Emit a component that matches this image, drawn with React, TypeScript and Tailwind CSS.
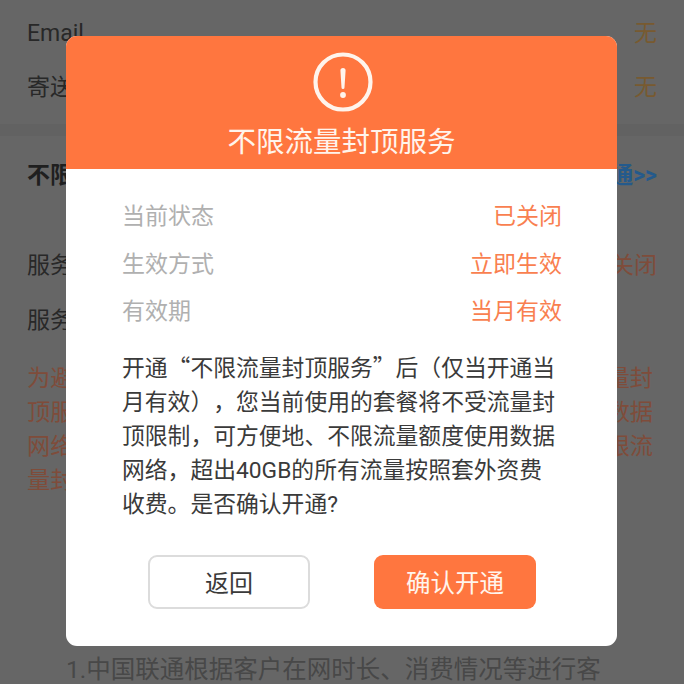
const cjk = '"Noto Sans CJK SC", "Noto Sans", sans-serif';

function Latin({ children }: { children: string }) {
  return <span className="font-[Roboto,sans-serif] leading-none">{children}</span>;
}

function BgRow({ label, value, valueClass }: { label: React.ReactNode; value: string; valueClass: string }) {
  return (
    <div className="flex h-[54px] items-center justify-between">
      <span className="text-[#282828]">{label}</span>
      <span className={valueClass}>{value}</span>
    </div>
  );
}

function InfoRow({ label, value }: { label: string; value: string }) {
  return (
    <div className="flex h-[47.5px] items-center justify-between">
      <span className="text-[#b0b0b0]">{label}</span>
      <span className="text-[#f97f50]">{value}</span>
    </div>
  );
}

export default function App() {
  return (
    <div
      className="relative h-[684px] w-[684px] overflow-hidden bg-[#666666] text-[23px] [text-spacing-trim:space-all]"
      style={{ fontFamily: cjk }}
      lang="zh-CN"
    >
      <div className="flex flex-col">
        <div className="pl-[27px] pr-[27px] pt-[4.5px]">
          <BgRow label={<Latin>Email</Latin>} value="无" valueClass="text-[#785a30]" />
          <BgRow label="寄送地址" value="无" valueClass="text-[#785a30]" />
        </div>
        <div className="mt-[11.5px] h-[12px] bg-[#626262]" />
        <div className="flex h-[74px] items-center justify-between pl-[27px] pr-[27px]">
          <span className="font-bold text-[#1f1f1f]">不限流量封顶服务</span>
          <span className="font-bold text-[#245a8c]">去开通<Latin>&gt;&gt;</Latin></span>
        </div>
        <div className="pl-[27px] pr-[27px] pt-[26px]">
          <div className="flex h-[55px] items-center justify-between">
            <span className="text-[#282828]">服务状态</span>
            <span className="text-[#7f4c3a]">已关闭</span>
          </div>
          <div className="flex h-[55px] items-center">
            <span className="text-[#282828]">服务说明</span>
          </div>
        </div>
        <p className="mt-[13px] pl-[27px] pr-[28px] text-[23.2px] leading-[34px] text-[#7f4c3a]">
          为避免因流量封顶影响您的正常使用，建议您开通不限流量封顶服务，开通后当月内您可方便地、不限流量额度地使用数据网络，如不开通则达到封顶值后将自动关闭数据网络，不限流量封顶服务仅当月有效。
        </p>
        <p className="mt-[156px] whitespace-nowrap pl-[66px] text-[24.5px] leading-[34px] text-[#484848]">
          <Latin>1.</Latin>中国联通根据客户在网时长、消费情况等进行客
        </p>
      </div>

      <div className="absolute inset-0 pl-[66px] pt-[36px]">
        <div className="flex h-[610px] w-[551px] flex-col overflow-hidden rounded-[11px] bg-white">
          <div className="flex h-[133px] flex-col items-center bg-[#ff763f] pt-[16px]">
            <svg width="60" height="60" viewBox="0 0 60 60" fill="none" className="overflow-visible">
              <circle cx="31" cy="30" r="27.5" stroke="#fff4ec" strokeWidth="4.2" />
              <path d="M28.4 18.5a2.6 2.6 0 0 1 5.2 0L32.5 35.5a1.5 1.5 0 0 1-3 0Z" fill="#fff4ec" />
              <circle cx="31" cy="43" r="2.9" fill="#fff4ec" />
            </svg>
            <div className="mt-[10px] text-[28.5px] leading-[36px] text-[#fff4ec]">不限流量封顶服务</div>
          </div>
          <div className="flex flex-1 flex-col pl-[56px] pr-[55px] pt-[21.5px]">
            <InfoRow label="当前状态" value="已关闭" />
            <InfoRow label="生效方式" value="立即生效" />
            <InfoRow label="有效期" value="当月有效" />
            <p className="mt-[17px] text-[22.8px] leading-[34px] text-[#3a3a3a]">
              开通“不限流量封顶服务”后（仅当开通当月有效），您当前使用的套餐将不受流量封顶限制，可方便地、不限流量额度使用数据网络，超出<Latin>40GB</Latin>的所有流量按照套外资费收费。是否确认开通<Latin>?</Latin>
            </p>
            <div className="mt-[35px] flex justify-between pl-[26px] pr-[26px]">
              <button className="flex h-[54px] w-[162px] items-center justify-center rounded-[9px] border-2 border-[#dcdcdc] bg-white text-[24px] text-[#3a3a3a]">
                返回
              </button>
              <button className="flex h-[54px] w-[162px] items-center justify-center rounded-[9px] bg-[#ff763f] text-[24.5px] text-[#fff4ec]">
                确认开通
              </button>
            </div>
          </div>
        </div>
      </div>
    </div>
  );
}
